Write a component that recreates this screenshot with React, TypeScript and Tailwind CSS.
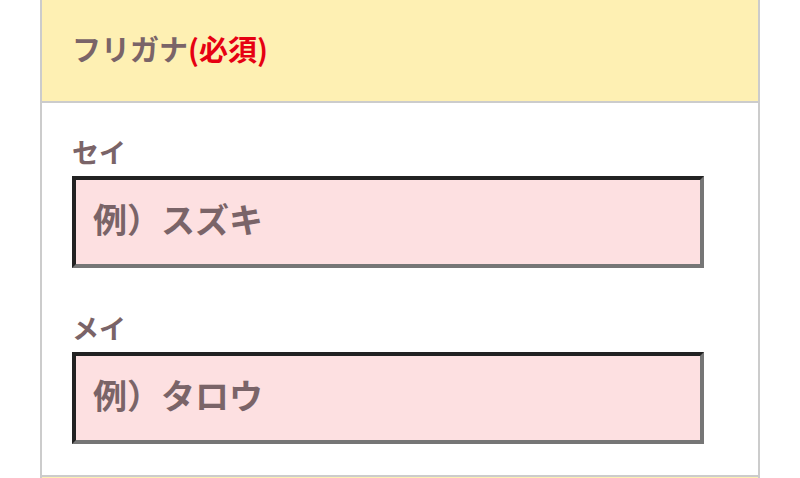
import React from "react";

const font = { fontFamily: '"Noto Sans CJK JP", "Noto Sans", sans-serif' };

const NameField: React.FC<{ label: string; placeholder: string; className?: string }> = ({
  label,
  placeholder,
  className = "",
}) => (
  <div className={className}>
    <label className="block text-[27px] font-bold leading-[33px] text-[#7a6468]">{label}</label>
    <input
      type="text"
      placeholder={placeholder}
      className="mt-[8px] block h-[92px] w-[632px] border-4 border-t-[#222222] border-l-[#222222] border-r-[#767676] border-b-[#767676] bg-[#fde0e1] px-[17px] pb-[7px] text-[34px] font-bold text-[#7a6468] outline-none placeholder:text-[#7a6468]"
      style={font}
    />
  </div>
);

export default function App() {
  return (
    <div className="h-[478px] w-[800px] overflow-hidden bg-white" style={font}>
      <div className="ml-[40px] w-[720px] border-x-2 border-[#cccccc]">
        <div className="flex h-[103px] items-center border-b-2 border-[#cccccc] bg-[#fef0b3] pb-[3px] pl-[30px]">
          <h2 className="text-[29px] font-bold text-[#7a6468]">
            フリガナ<span className="text-[#e60012]">(必須)</span>
          </h2>
        </div>
        <div className="border-b-2 border-[#cccccc] px-[30px] pb-[31px] pt-[32px]">
          <NameField label="セイ" placeholder="例）スズキ" />
          <NameField label="メイ" placeholder="例）タロウ" className="mt-[43px]" />
        </div>
        <div className="h-[20px] bg-[#fef0b3]" />
      </div>
    </div>
  );
}
